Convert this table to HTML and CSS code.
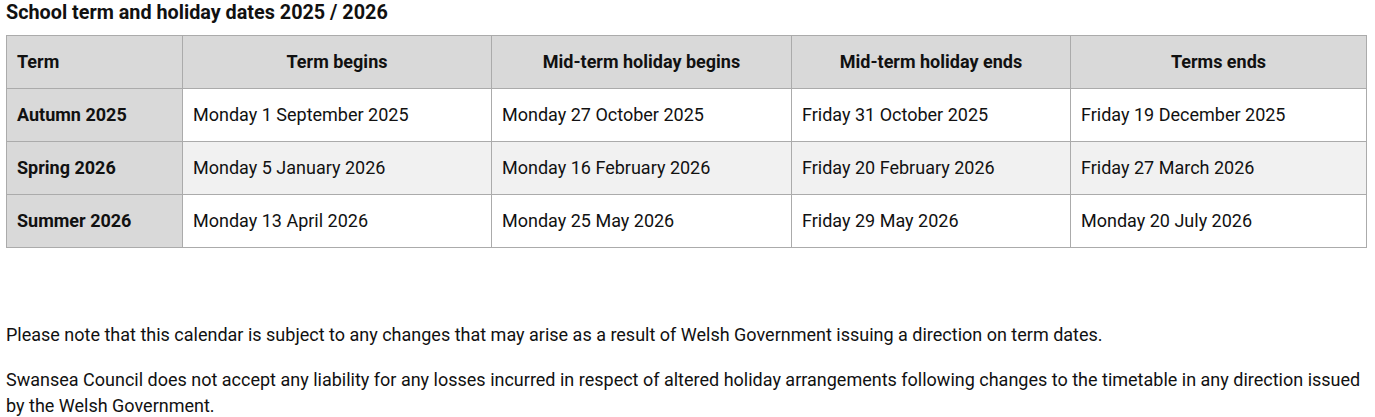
FILE: index.html
```html
<!DOCTYPE html>
<html lang="en">
<head>
<meta charset="utf-8">
<title>School term dates</title>
<link rel="stylesheet" href="styles.css">
</head>
<body>
<div class="page">
  <h2 class="title">School term and holiday dates 2025 / 2026</h2>
  <table class="terms">
    <colgroup>
      <col class="c1"><col class="c2"><col class="c3"><col class="c4"><col class="c5">
    </colgroup>
    <thead>
      <tr>
        <th class="first">Term</th>
        <th>Term begins</th>
        <th>Mid-term holiday begins</th>
        <th>Mid-term holiday ends</th>
        <th>Terms ends</th>
      </tr>
    </thead>
    <tbody>
      <tr>
        <th class="first">Autumn 2025</th>
        <td>Monday 1 September 2025</td>
        <td>Monday 27 October 2025</td>
        <td>Friday 31 October 2025</td>
        <td>Friday 19 December 2025</td>
      </tr>
      <tr class="alt">
        <th class="first">Spring 2026</th>
        <td>Monday 5 January 2026</td>
        <td>Monday 16 February 2026</td>
        <td>Friday 20 February 2026</td>
        <td>Friday 27 March 2026</td>
      </tr>
      <tr>
        <th class="first">Summer 2026</th>
        <td>Monday 13 April 2026</td>
        <td>Monday 25 May 2026</td>
        <td>Friday 29 May 2026</td>
        <td>Monday 20 July 2026</td>
      </tr>
    </tbody>
  </table>
  <p class="note first-note">Please note that this calendar is subject to any changes that may arise as a result of Welsh Government issuing a direction on term dates.</p>
  <p class="note last-note">Swansea Council does not accept any liability for any losses incurred in respect of altered holiday arrangements following changes to the timetable in any direction issued by the Welsh Government.</p>
</div>
</body>
</html>
```
FILE: styles.css
```css
html, body {
  margin: 0;
  padding: 0;
  background: #fff;
}
body {
  font-family: Roboto, "Liberation Sans", Arial, sans-serif;
  color: #111;
  font-size: 18px;
}
.page {
  padding: 0 9px 0 6px;
}
.title {
  margin: 0;
  padding-top: 1px;
  font-size: 19.8px;
  font-weight: 700;
  line-height: 24px;
  height: 34px;
}
.terms {
  width: 1360px;
  border-collapse: collapse;
  table-layout: fixed;
}
.c1 { width: 176px; }
.c2 { width: 309px; }
.c3 { width: 300px; }
.c4 { width: 279px; }
.c5 { width: 296px; }
.terms th, .terms td {
  border: 1px solid #ababab;
  height: 53px;
  padding: 0 10px;
  box-sizing: border-box;
  font-size: 18px;
  line-height: 22px;
  vertical-align: middle;
}
.terms thead th {
  background: #d9d9d9;
  font-weight: 700;
  text-align: center;
}
.terms thead th.first {
  text-align: left;
}
.terms tbody th.first {
  background: #d9d9d9;
  font-weight: 700;
  text-align: left;
}
.terms td {
  text-align: left;
  font-weight: 400;
}
.terms tr.alt td {
  background: #f1f1f1;
}
.note {
  margin: 0 0 19px;
  line-height: 26px;
}
.first-note {
  margin-top: 74px;
}
.last-note {
  margin-bottom: 0;
}
```
